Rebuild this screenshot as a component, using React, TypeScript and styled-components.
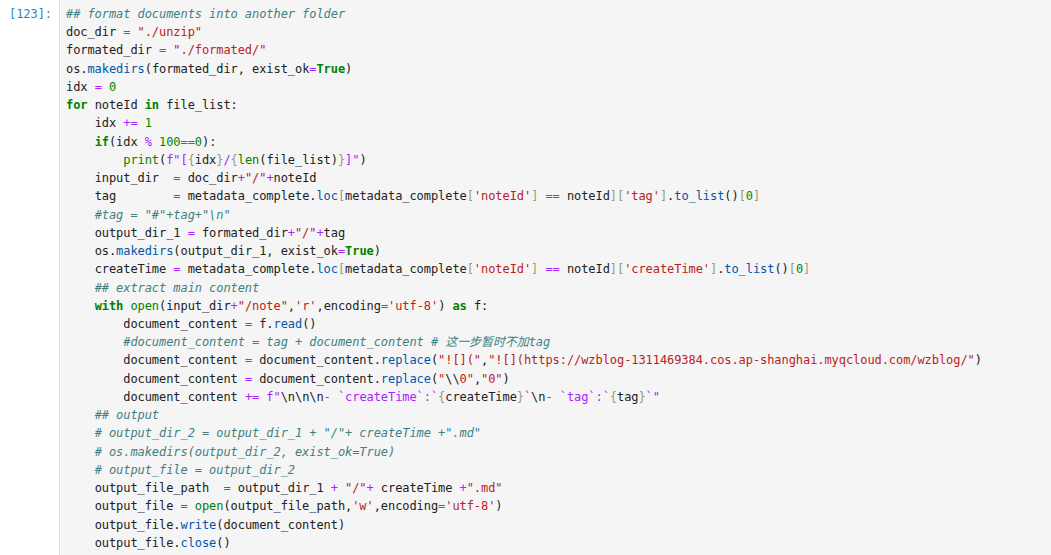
import React from "react";
import styled, { createGlobalStyle, css } from "styled-components";

const Global = createGlobalStyle`
  html, body {
    margin: 0;
    padding: 0;
    background: #ffffff;
    overflow: hidden;
  }
  body {
    font-family: "DejaVu Sans Mono", "Liberation Mono", monospace;
  }
`;

type Kind =
  | "plain"
  | "comment"
  | "keyword"
  | "builtin"
  | "number"
  | "operator"
  | "string"
  | "fstring"
  | "escape"
  | "bracket"
  | "property";

interface Token {
  kind: Kind;
  text: string;
}

const KEYWORDS = new Set([
  "for", "in", "if", "with", "as", "True", "False", "None", "import",
  "from", "def", "return", "else", "elif", "while", "not", "and", "or",
]);
const BUILTINS = new Set(["print", "len", "open", "range", "str", "int"]);

function readString(line: string, start: number, out: Token[], fmt: boolean): number {
  const kind: Kind = fmt ? "fstring" : "string";
  const q = line[start];
  let i = start + 1;
  let buf = q;
  const flush = () => {
    if (buf) out.push({ kind, text: buf });
    buf = "";
  };
  while (i < line.length) {
    const c = line[i];
    if (c === "\\") {
      flush();
      out.push({ kind: "escape", text: line.slice(i, i + 2) });
      i += 2;
      continue;
    }
    if (fmt && c === "{") {
      flush();
      out.push({ kind: "bracket", text: "{" });
      let j = i + 1;
      let depth = 1;
      while (j < line.length && depth > 0) {
        if (line[j] === "{") depth++;
        if (line[j] === "}") depth--;
        if (depth > 0) j++;
      }
      tokenizeInto(line.slice(i + 1, j), out);
      out.push({ kind: "bracket", text: "}" });
      i = j + 1;
      continue;
    }
    buf += c;
    i++;
    if (c === q) break;
  }
  flush();
  return i;
}

function tokenizeInto(line: string, out: Token[]) {
  let i = 0;
  while (i < line.length) {
    const c = line[i];
    if (c === " ") {
      let j = i;
      while (j < line.length && line[j] === " ") j++;
      out.push({ kind: "plain", text: line.slice(i, j) });
      i = j;
    } else if (c === "#") {
      out.push({ kind: "comment", text: line.slice(i) });
      i = line.length;
    } else if ((c === "f" || c === "F") && (line[i + 1] === '"' || line[i + 1] === "'")) {
      out.push({ kind: "fstring", text: c });
      i = readString(line, i + 1, out, true);
    } else if (c === '"' || c === "'") {
      i = readString(line, i, out, false);
    } else if (/[A-Za-z_]/.test(c)) {
      let j = i;
      while (j < line.length && /[A-Za-z0-9_]/.test(line[j])) j++;
      const word = line.slice(i, j);
      let kind: Kind = "plain";
      if (KEYWORDS.has(word)) kind = "keyword";
      else if (BUILTINS.has(word)) kind = "builtin";
      else if (i > 0 && line[i - 1] === ".") kind = "property";
      out.push({ kind, text: word });
      i = j;
    } else if (/[0-9]/.test(c)) {
      let j = i;
      while (j < line.length && /[0-9.]/.test(line[j])) j++;
      out.push({ kind: "number", text: line.slice(i, j) });
      i = j;
    } else if (/[+\-*/%=<>!]/.test(c)) {
      let j = i;
      while (j < line.length && /[+\-*/%=<>!]/.test(line[j])) j++;
      out.push({ kind: "operator", text: line.slice(i, j) });
      i = j;
    } else if (/[\[\]{}]/.test(c)) {
      out.push({ kind: "bracket", text: c });
      i++;
    } else {
      out.push({ kind: "plain", text: c });
      i++;
    }
  }
}

function tokenize(line: string): Token[] {
  const out: Token[] = [];
  tokenizeInto(line, out);
  return out;
}

const CODE: string[] = [
  "## format documents into another folder",
  'doc_dir = "./unzip"',
  'formated_dir = "./formated/"',
  "os.makedirs(formated_dir, exist_ok=True)",
  "idx = 0",
  "for noteId in file_list:",
  "    idx += 1",
  "    if(idx % 100==0):",
  '        print(f"[{idx}/{len(file_list)}]")',
  '    input_dir  = doc_dir+"/"+noteId',
  "    tag        = metadata_complete.loc[metadata_complete['noteId'] == noteId]['tag'].to_list()[0]",
  '    #tag = "#"+tag+"\\n"',
  '    output_dir_1 = formated_dir+"/"+tag',
  "    os.makedirs(output_dir_1, exist_ok=True)",
  "    createTime = metadata_complete.loc[metadata_complete['noteId'] == noteId]['createTime'].to_list()[0]",
  "    ## extract main content",
  "    with open(input_dir+\"/note\",'r',encoding='utf-8') as f:",
  "        document_content = f.read()",
  "        #document_content = tag + document_content # 这一步暂时不加tag",
  '        document_content = document_content.replace("![](","![](https://wzblog-1311469384.cos.ap-shanghai.myqcloud.com/wzblog/")',
  '        document_content = document_content.replace("\\\\0","0")',
  '        document_content += f"\\n\\n\\n- `createTime`:`{createTime}`\\n- `tag`:`{tag}`"',
  "    ## output",
  '    # output_dir_2 = output_dir_1 + "/"+ createTime +".md"',
  "    # os.makedirs(output_dir_2, exist_ok=True)",
  "    # output_file = output_dir_2",
  '    output_file_path  = output_dir_1 + "/"+ createTime +".md"',
  "    output_file = open(output_file_path,'w',encoding='utf-8')",
  "    output_file.write(document_content)",
  "    output_file.close()",
  "    ## copy the attachment files of the note into the folder",
];

const Cell = styled.div`
  display: flex;
  flex-direction: row;
  align-items: stretch;
  width: 100%;
  min-height: 555px;
`;

const Prompt = styled.div`
  flex: 0 0 59px;
  box-sizing: border-box;
  padding: 5px 7px 0 0;
  text-align: right;
  color: #307fc1;
  font-family: "DejaVu Sans Mono", "Liberation Mono", monospace;
  font-size: 12px;
  letter-spacing: -0.07px;
  line-height: 18.24px;
  white-space: pre;
`;

const Editor = styled.div`
  flex: 1 1 auto;
  box-sizing: border-box;
  background: #f5f5f5;
  border-left: 1px solid #e0e0e0;
  padding: 5px 0 0 6px;
  display: flex;
  flex-direction: column;
`;

const Line = styled.div`
  font-family: "DejaVu Sans Mono", "Liberation Mono", "Noto Sans CJK SC", monospace;
  font-size: 12px;
  letter-spacing: -0.07px;
  line-height: 18.24px;
  height: 18.24px;
  white-space: pre;
  color: #212121;
`;

const kindStyles: Record<Kind, ReturnType<typeof css>> = {
  plain: css`color: #212121;`,
  comment: css`color: #408080; font-style: italic;`,
  keyword: css`color: #008000; font-weight: bold;`,
  builtin: css`color: #008000;`,
  number: css`color: #008800;`,
  operator: css`color: #aa22ff;`,
  string: css`color: #ba2121;`,
  fstring: css`color: #aa22ff;`,
  escape: css`color: #212121;`,
  bracket: css`color: #999977;`,
  property: css`color: #0055aa;`,
};

const Tok = styled.span<{ $kind: Kind }>`
  ${(p) => kindStyles[p.$kind]}
`;

const CodeLine: React.FC<{ text: string }> = ({ text }) => (
  <Line>
    {tokenize(text).map((t, i) => (
      <Tok key={i} $kind={t.kind}>
        {t.text}
      </Tok>
    ))}
  </Line>
);

export default function App() {
  return (
    <>
      <Global />
      <Cell>
        <Prompt>[123]:</Prompt>
        <Editor>
          {CODE.map((l, i) => (
            <CodeLine key={i} text={l} />
          ))}
        </Editor>
      </Cell>
    </>
  );
}
